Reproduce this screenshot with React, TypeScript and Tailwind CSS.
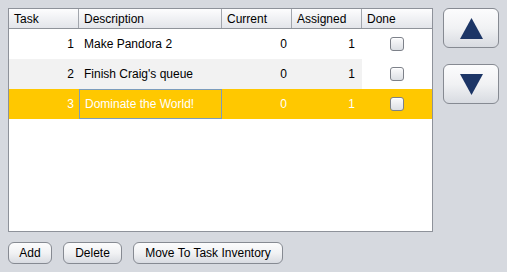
import React from "react";

const rows = [
  { n: 1, d: "Make Pandora 2", c: 0, a: 1 },
  { n: 2, d: "Finish Craig's queue", c: 0, a: 1 },
  { n: 3, d: "Dominate the World!", c: 0, a: 1 },
];

function Checkbox() {
  return (
    <div className="w-[14px] h-[14px] rounded-[3px] border border-[#7d8189] bg-gradient-to-b from-[#fbfbfc] to-[#dcdfe4] shadow-[inset_0_1px_0_#ffffff]" />
  );
}

function Btn({ children, w }: { children: React.ReactNode; w: string }) {
  return (
    <div
      className={`${w} h-[22px] flex items-center justify-center rounded-[6px] border border-[#868a92] bg-gradient-to-b from-[#fcfcfd] via-[#f1f2f4] to-[#d8dbe1] text-[12px] text-black`}
    >
      {children}
    </div>
  );
}

export default function App() {
  return (
    <div
      className="w-[507px] h-[272px] bg-[#d6d9df] p-[8px] flex flex-col gap-[10px]"
      style={{ fontFamily: '"Liberation Sans", Arial, sans-serif' }}
    >
      <div className="flex gap-[10px]">
        <div className="w-[425px] h-[224px] border border-[#8e929a] bg-white flex flex-col">
          <div className="flex h-[20px] border-b border-[#8f939a] bg-gradient-to-b from-[#fdfdfe] to-[#e3e5ea] text-[12px] text-black">
            <div className="w-[70px] border-r border-[#a2a6ad] pl-[5px] flex items-center">Task</div>
            <div className="w-[143px] border-r border-[#a2a6ad] pl-[5px] flex items-center">Description</div>
            <div className="w-[70px] border-r border-[#a2a6ad] pl-[5px] flex items-center">Current</div>
            <div className="w-[70px] border-r border-[#a2a6ad] pl-[5px] flex items-center">Assigned</div>
            <div className="w-[70px] pl-[5px] flex items-center">Done</div>
          </div>
          {rows.map((r, i) => {
            const sel = i === 2;
            const bg = sel ? "bg-[#ffc800]" : i === 1 ? "bg-[#f2f2f2]" : "bg-white";
            const txt = sel ? "text-white" : "text-black";
            return (
              <div key={r.n} className={`flex h-[30px] text-[12px] ${txt}`}>
                <div className={`w-[70px] ${bg} flex items-center justify-end pr-[5px]`}>{r.n}</div>
                <div className={`w-[143px] ${bg} flex items-center pl-[5px] ${sel ? "border border-[#7b9cbc] pl-[4px]" : ""}`}>
                  {r.d}
                </div>
                <div className={`w-[70px] ${bg} flex items-center justify-end pr-[5px]`}>{r.c}</div>
                <div className={`w-[70px] ${bg} flex items-center justify-end pr-[7px]`}>{r.a}</div>
                <div className={`w-[70px] ${sel ? "bg-[#ffc800]" : "bg-white"} flex items-center justify-center`}>
                  <Checkbox />
                </div>
              </div>
            );
          })}
        </div>
        <div className="flex flex-col gap-[16px]">
          <div className="w-[56px] h-[40px] rounded-[6px] border border-[#868a92] bg-gradient-to-b from-[#fcfcfd] via-[#f1f2f4] to-[#d8dbe1] flex items-center justify-center">
            <svg width="23" height="21" viewBox="0 0 23 21">
              <polygon points="11.5,0 23,21 0,21" fill="#1c3566" />
            </svg>
          </div>
          <div className="w-[56px] h-[40px] rounded-[6px] border border-[#868a92] bg-gradient-to-b from-[#fcfcfd] via-[#f1f2f4] to-[#d8dbe1] flex items-center justify-center">
            <svg width="23" height="21" viewBox="0 0 23 21">
              <polygon points="0,0 23,0 11.5,21" fill="#1c3566" />
            </svg>
          </div>
        </div>
      </div>
      <div className="flex gap-[11px]">
        <Btn w="w-[44px]">Add</Btn>
        <Btn w="w-[59px]">Delete</Btn>
        <Btn w="w-[150px]">Move To Task Inventory</Btn>
      </div>
    </div>
  );
}
